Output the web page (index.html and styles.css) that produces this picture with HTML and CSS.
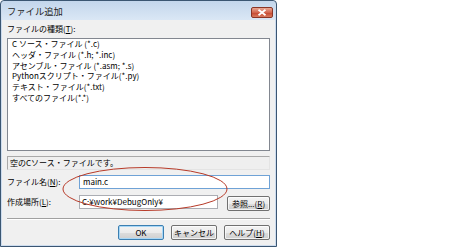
FILE: index.html
```html
<!DOCTYPE html>
<html lang="ja">
<head>
<meta charset="utf-8">
<title>ファイル追加</title>
<link rel="stylesheet" href="styles.css">
</head>
<body>
<div class="window">
  <div class="titlebar">
    <span class="title">ファイル追加</span>
    <span class="close"><svg width="10" height="7" viewBox="0 0 10 7"><path d="M1.5 0.8 L8.5 6.2 M8.5 0.8 L1.5 6.2" stroke="#fff" stroke-width="1.8" fill="none"/></svg></span>
  </div>
  <div class="client">
    <div class="label">ファイルの種類(<u>T</u>):</div>
    <ul class="list">
      <li>C ソース・ファイル (*.c)</li>
      <li>ヘッダ・ファイル (*.h; *.inc)</li>
      <li>アセンブル・ファイル (*.asm; *.s)</li>
      <li>Pythonスクリプト・ファイル(*.py)</li>
      <li>テキスト・ファイル(*.txt)</li>
      <li>すべてのファイル(*.*)</li>
    </ul>
    <div class="status">空のCソース・ファイルです。</div>
    <div class="row">
      <span class="rlabel">ファイル名(<u>N</u>):</span>
      <span class="field focus">main.c</span>
    </div>
    <div class="row">
      <span class="rlabel">作成場所(<u>L</u>):</span>
      <span class="field ro">C:¥work¥DebugOnly¥</span>
      <button class="btn browse">参照...(<u>R</u>)</button>
    </div>
    <div class="sep"></div>
    <div class="buttons">
      <button class="btn default">OK</button>
      <button class="btn">キャンセル</button>
      <button class="btn">ヘルプ(<u>H</u>)</button>
    </div>
  </div>
  <svg class="annot" width="277" height="247" viewBox="0 0 277 247"><ellipse cx="145" cy="189" rx="82" ry="21.5" fill="none" stroke="#b73a28" stroke-width="1"/></svg>
</div>
</body>
</html>
```

FILE: styles.css
```css
* { box-sizing: border-box; }
html, body { margin: 0; padding: 0; background: #fff; }
body {
  font-family: "Noto Sans CJK JP", sans-serif;
  font-size: 8px;
  color: #000;
}
u { text-decoration: underline; text-underline-offset: 1px; }
.window {
  position: relative;
  width: 277px;
  height: 247px;
  border: 1px solid #3b5672;
  border-radius: 4px 4px 0 0;
  background: #cddcee;
  display: flex;
  flex-direction: column;
  padding: 0 1px 1px 1px;
}
.titlebar {
  height: 19px;
  flex: none;
  display: flex;
  align-items: center;
  justify-content: space-between;
  padding: 1px 2px 0 5px;
  background: linear-gradient(#c3d6ec, #dae7f5);
  border-radius: 3px 3px 0 0;
}
.title {
  font-size: 9.3px;
  line-height: 11px;
  color: #1e1e1e;
}
.close {
  width: 22px;
  height: 11px;
  margin-top: 3px;
  border: 1px solid #8a3526;
  border-radius: 2px;
  background: linear-gradient(#e9a793, #d2654e 50%, #c4432c 51%, #d87b60);
  display: flex;
  align-items: center;
  justify-content: center;
}
.close svg { display: block; }
.client {
  flex: 1;
  background: #f0f0f0;
  padding: 3px 5px 0 5px;
  display: flex;
  flex-direction: column;
}
.label {
  height: 11px;
  line-height: 11px;
}
.list {
  list-style: none;
  margin: 4px 0 0 0;
  padding: 0 0 0 4px;
  height: 113px;
  background: #fff;
  border: 1px solid #828790;
}
.list li {
  line-height: 10.8px;
  height: 10.8px;
  white-space: nowrap;
}
.status {
  margin-top: 5px;
  height: 14px;
  line-height: 12px;
  padding-left: 2px;
  border: 1px solid;
  border-color: #a9a9a9 #e4e4e4 #e4e4e4 #a9a9a9;
  background: #efefef;
}
.row {
  margin-top: 5px;
  height: 15px;
  display: flex;
  align-items: flex-start;
}
.rlabel {
  width: 72px;
  flex: none;
  line-height: 14px;
}
.field {
  height: 14px;
  line-height: 12px;
  background: #fff;
  border: 1px solid #abadb3;
  white-space: nowrap;
}
.field.focus {
  flex: 1;
  border-color: #6fa2d6;
  padding-left: 3px;
}
.field.ro {
  width: 139px;
  padding-left: 2px;
}
.btn {
  font: inherit;
  color: #000;
  height: 15px;
  padding: 0;
  margin: 0;
  border: 1px solid #707070;
  border-radius: 2px;
  background: linear-gradient(#f3f3f3, #ebebeb 50%, #dddddd 51%, #cfcfcf);
  box-shadow: inset 0 0 0 1px rgba(255,255,255,0.7);
  line-height: 12px;
  white-space: nowrap;
}
.browse {
  width: 43px;
  margin-left: 9px;
  margin-top: 1px;
}
.sep {
  margin-top: 8px;
  height: 2px;
  border-top: 1px solid #a0a0a0;
  border-bottom: 1px solid #fff;
}
.buttons {
  margin-top: 5px;
  display: flex;
  justify-content: flex-end;
  gap: 7px;
}
.buttons .btn { width: 46px; }
.btn.default {
  border-color: #3c7fb1;
  box-shadow: inset 0 0 0 1px #a7d7f7;
}
.annot {
  position: absolute;
  left: -1px;
  top: -1px;
  pointer-events: none;
}
```
